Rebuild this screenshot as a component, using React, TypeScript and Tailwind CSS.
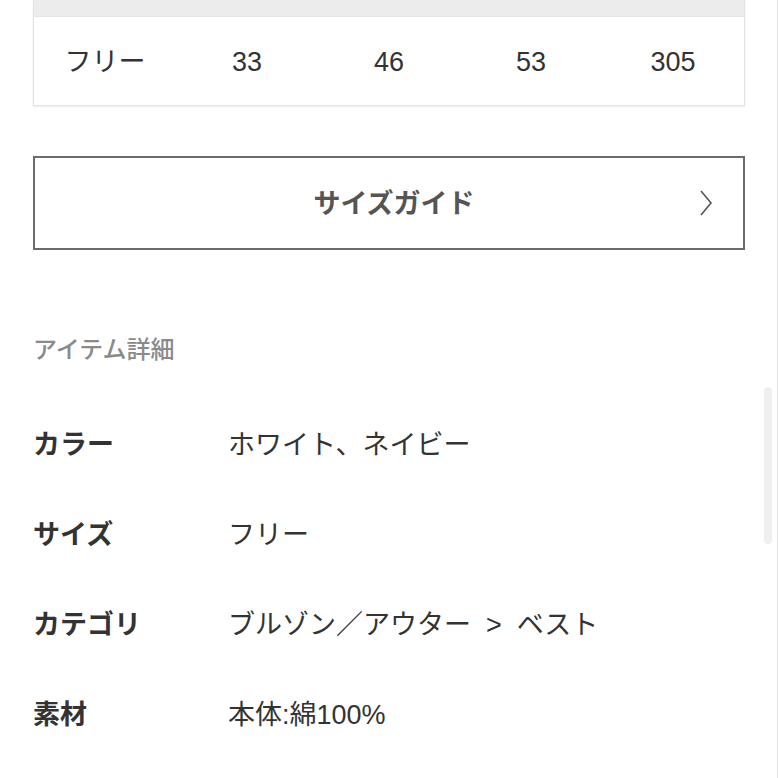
const sizes = ['フリー', '33', '46', '53', '305']

const details = [
  { label: 'カラー', value: 'ホワイト、ネイビー' },
  { label: 'サイズ', value: 'フリー' },
  { label: 'カテゴリ', value: 'ブルゾン／アウター\u00a0\u00a0>\u00a0\u00a0ベスト' },
  { label: '素材', value: '本体:綿100%' },
]

const App = () => {
  return (
    <div
      className="relative w-[778px] h-[778px] overflow-hidden bg-white text-[#333]"
      style={{ fontFamily: '"Liberation Sans", "Noto Sans CJK JP", sans-serif' }}
    >
      <div className="px-[33px]">
        <div className="border-x border-b border-[#e3e3e3] shadow-[0_1px_2px_rgba(0,0,0,0.08)]">
          <div className="h-[16px] bg-[#ececec]" />
          <div className="grid grid-cols-5 h-[89px] items-center border-t border-[#e6e6e6] pt-[2px]">
            {sizes.map((s) => (
              <div key={s} className="text-center text-[27px] text-[#333] leading-none">
                {s}
              </div>
            ))}
          </div>
        </div>

        <button className="mt-[50px] w-full h-[94px] border-2 border-[#6b6b6b] flex items-center justify-center relative">
          <span className="text-[27px] font-bold text-[#555] pl-[10px] pt-[3px]">サイズガイド</span>
          <svg
            className="absolute right-[30px] top-1/2 -translate-y-1/2"
            width="14"
            height="26"
            viewBox="0 0 14 26"
            fill="none"
            stroke="#555"
            strokeWidth="1.6"
          >
            <path d="M2 1 L12 13 L2 25" />
          </svg>
        </button>

        <div className="mt-[88px] text-[24px] font-medium text-[#8a8a8a] leading-none">アイテム詳細</div>

        <div className="mt-[65px] flex flex-col gap-[54px]">
          {details.map((d) => (
            <div key={d.label} className="flex items-center h-[36px]">
              <div className="w-[195px] text-[27px] font-bold text-[#333]">{d.label}</div>
              <div className="text-[27px] text-[#333]">{d.value}</div>
            </div>
          ))}
        </div>
      </div>

      <div className="absolute right-[6px] top-[387px] w-[8px] h-[157px] bg-[#efefef] rounded" />
      <div className="absolute right-0 top-0 w-[1px] h-full bg-[#e5e5e5]" />
    </div>
  )
}

export default App
